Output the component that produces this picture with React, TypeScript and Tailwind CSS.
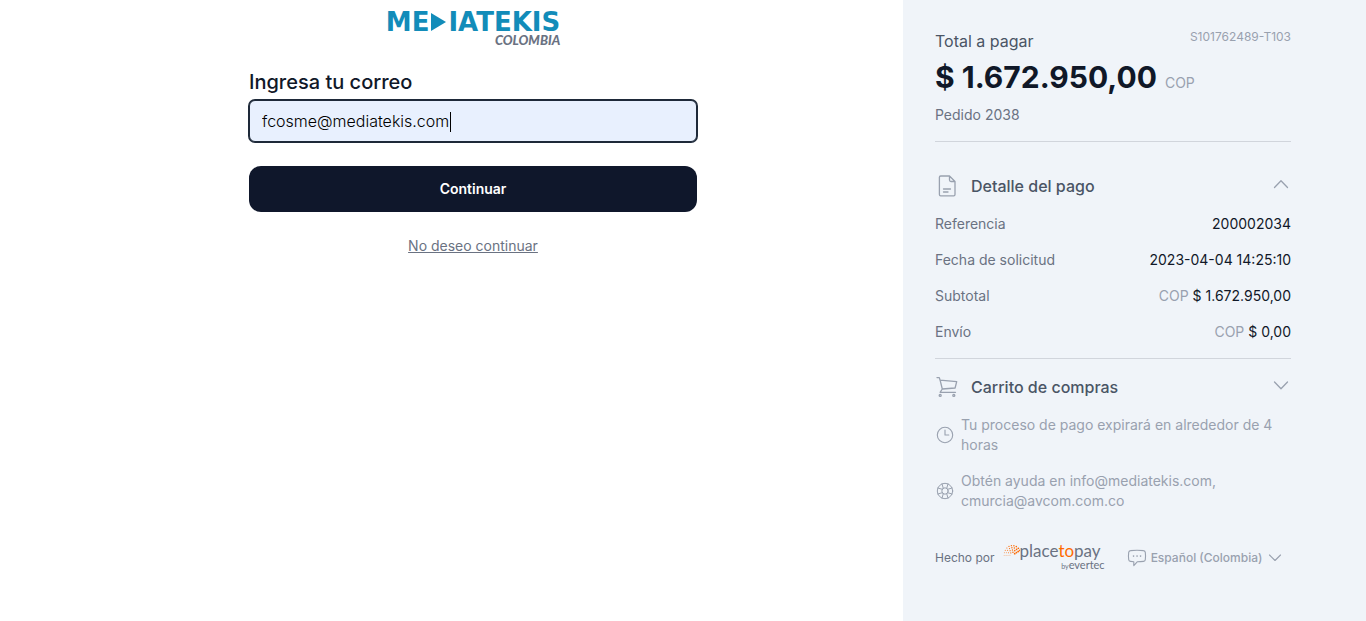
import React, { useEffect, useRef, useState } from 'react';

const details = [
  { label: 'Referencia', value: '200002034' },
  { label: 'Fecha de solicitud', value: '2023-04-04 14:25:10' },
  { label: 'Subtotal', currency: 'COP', value: '$ 1.672.950,00' },
  { label: 'Envío', currency: 'COP', value: '$ 0,00' },
];

const iconProps = {
  fill: 'none',
  stroke: 'currentColor',
  strokeLinecap: 'round' as const,
  strokeLinejoin: 'round' as const,
  'aria-hidden': true,
};

const FileIcon = () => (
  <svg {...iconProps} strokeWidth={1.3} viewBox="0 0 24 24" className="size-6 text-gray-400">
    <path d="M6 2h8.5L20 7.5v13a1.3 1.3 0 0 1-1.3 1.3h-13a1.3 1.3 0 0 1-1.3-1.3V3.300A1.300 1.300 0 0 1 5.700 2zM14.500 2v4a1.500 1.500 0 0 0 1.500 1.500h4M8.500 15h7M8.500 18h4.500" />
  </svg>
);

const CartIcon = () => (
  <svg {...iconProps} strokeWidth={1.3} viewBox="0 0 24 24" className="size-6 text-gray-400">
    <path d="M2 2.600h2.300l.8 2.600L7.300 14M5.100 5.200l16.600 1.500-1.600 6.300-12.800 1-2.200 3.300h15.400" />
    <circle cx="5.200" cy="20.400" r="1" />
    <circle cx="18.800" cy="20.400" r="1" />
  </svg>
);

const ClockIcon = () => (
  <svg {...iconProps} strokeWidth={1.1} viewBox="0 0 20 20" className="size-5 shrink-0 text-gray-400">
    <circle cx="10" cy="10" r="7.700" />
    <path d="M10 5v5h3.800" />
  </svg>
);

const HelpIcon = () => (
  <svg {...iconProps} strokeWidth={1} viewBox="0 0 20 20" className="size-5 shrink-0 text-gray-400">
    <circle cx="10" cy="10" r="7.700" />
    <circle cx="10" cy="10" r="3.200" />
    <path d="M8.300 7.300 7 2.900M7.300 8.300 2.900 7M11.700 7.300 13 2.900M12.700 8.300 17.100 7M8.300 12.700 7 17.100M7.300 11.700 2.900 13M11.700 12.700l1.300 4.400M12.700 11.700l4.400 1.300" />
  </svg>
);

const ChatIcon = () => (
  <svg {...iconProps} strokeWidth={1.1} viewBox="0 0 20 20" className="size-5 shrink-0 text-gray-400">
    <path d="M3.500 2.600Q10 1.800 16.500 2.600a2 2 0 0 1 1.800 1.800q.5 3.600 0 7.200a2 2 0 0 1-1.800 1.800q-3.200.4-6.300.4L6.800 17.600v-3.900l-3.300-.3a2 2 0 0 1-1.800-1.800q-.5-3.600 0-7.200a2 2 0 0 1 1.800-1.800z" />
    <path d="M6.500 8.100h.1M10 8.100h.1M13.500 8.100h.1" strokeWidth={1.6} />
  </svg>
);

const Chevron: React.FC<{ open?: boolean }> = ({ open }) => (
  <svg {...iconProps} strokeWidth={1.3} viewBox="0 0 20 20" className="size-5 text-gray-400">
    <path d={open ? 'M3.500 11.500 10 4.800l6.500 6.700' : 'M3.500 5 10 11.700l6.500-6.700'} />
  </svg>
);

// Arcs of dots forming a dome, heavier towards the right
const fanDots = [3, 5.3, 7.6, 9.9].flatMap((r, ring) =>
  Array.from({ length: 4 + ring * 2 }, (_, i) => {
    const t = i / (3 + ring * 2);
    const angle = Math.PI * (0.98 + t * 0.86);
    return {
      x: 9.5 + r * 0.85 * Math.cos(angle),
      y: 12 + r * 0.95 * Math.sin(angle),
      r: 0.4 + t * 0.5,
    };
  })
);

const MediatekisLogo = () => (
  <div className="flex flex-col items-end" role="img" aria-label="Mediatekis Colombia">
    <div className="flex items-center font-['DejaVu_Sans'] text-[26px] leading-6 font-bold text-[#128cb9]">
      <span>ME</span>
      <svg viewBox="0 0 15 18" className="ml-0.5 h-[18px] w-[15px]" fill="currentColor" aria-hidden="true">
        <path d="M0 0l15 9-15 9z" />
      </svg>
      <span className="ml-0.5">IATEKIS</span>
    </div>
    <span className="font-[Lato] text-[13px] leading-3 font-black text-gray-500 italic">COLOMBIA</span>
  </div>
);

const PlacetopayLogo = () => (
  <div className="flex flex-col items-end" role="img" aria-label="Placetopay by Evertec">
    <div className="mr-1 flex">
      <svg viewBox="0 0 17 14" className="h-[14px] w-[17px] fill-orange-500" aria-hidden="true">
        {fanDots.map((dot, index) => (
          <circle key={index} cx={dot.x} cy={dot.y} r={dot.r} />
        ))}
      </svg>
      <span className="font-[Lato] text-[17px] leading-4 text-gray-500">
        place<span className="text-orange-500">to</span>pay
      </span>
    </div>
    <span className="font-[Lato] text-[11px] leading-3 text-gray-500">
      <span className="text-[7px]">by</span>evertec
    </span>
  </div>
);

const App: React.FC = () => {
  const [email, setEmail] = useState('fcosme@mediatekis.com');
  const [touched, setTouched] = useState(false);
  const [detailOpen, setDetailOpen] = useState(true);
  const [cartOpen, setCartOpen] = useState(false);
  const emailRef = useRef<HTMLInputElement>(null);

  useEffect(() => {
    const input = emailRef.current;
    if (input) {
      input.focus();
      input.setSelectionRange(input.value.length, input.value.length);
    }
  }, []);

  return (
    <div className="grid min-h-screen grid-cols-[1fr_minmax(0,860px)_420px_1fr] bg-white font-[Inter,sans-serif] text-gray-900">
      <main className="col-start-2 px-6 pt-2.5">
        <div className="mx-auto flex max-w-md flex-col">
          <div className="flex justify-center">
            <MediatekisLogo />
          </div>

          <form className="mt-5 flex flex-col" onSubmit={(e) => e.preventDefault()}>
            <label htmlFor="email" className="mb-0.5 text-xl leading-8 font-medium">
              Ingresa tu correo
            </label>
            <div className="relative">
              <input
                ref={emailRef}
                id="email"
                type="text"
                value={email}
                onChange={(e) => {
                  setTouched(true);
                  setEmail(e.target.value);
                }}
                className={`h-[42px] w-full rounded-md border border-gray-800 bg-[#e8f0fe] px-3 text-base font-light text-black ring-1 ring-gray-800 outline-none ${
                  touched ? '' : 'caret-transparent'
                }`}
              />
              {!touched && <span className="absolute top-3 left-[201px] h-5 w-px bg-black" />}
            </div>
            <button type="submit" className="mt-6 h-[46px] rounded-xl bg-slate-900 text-sm font-semibold text-white">
              Continuar
            </button>
          </form>

          <a href="#cancelar" className="mt-6 self-center text-sm text-gray-500 underline">
            No deseo continuar
          </a>
        </div>
      </main>

      <aside className="col-span-2 col-start-3 bg-[#f0f4f9]">
        <div className="w-[420px] px-8 pt-[29px]">
          <div className="flex items-start justify-between">
            <h2 className="text-base leading-6 text-gray-600">Total a pagar</h2>
            <span className="text-xs leading-4 text-gray-400">S101762489-T103</span>
          </div>
          <p className="mt-0.5 flex items-baseline gap-2">
            <span className="text-3xl leading-11 font-bold">$ 1.672.950,00</span>
            <span className="text-sm text-gray-400">COP</span>
          </p>
          <p className="mt-1 border-b border-gray-300 pb-3.5 text-sm leading-6 text-gray-500">Pedido 2038</p>

          <section className="mt-8 border-b border-gray-300 pb-4">
            <button
              type="button"
              aria-expanded={detailOpen}
              onClick={() => setDetailOpen(!detailOpen)}
              className="flex w-full items-center"
            >
              <FileIcon />
              <span className="ml-3 font-medium text-gray-600">Detalle del pago</span>
              <span className="ml-auto">
                <Chevron open={detailOpen} />
              </span>
            </button>
            {detailOpen && (
              <dl className="mt-4 flex flex-col gap-4 text-sm">
                {details.map((row) => (
                  <div key={row.label} className="flex justify-between">
                    <dt className="text-gray-500">{row.label}</dt>
                    <dd>
                      {row.currency && <span className="text-gray-400">{row.currency} </span>}
                      {row.value}
                    </dd>
                  </div>
                ))}
              </dl>
            )}
          </section>

          <button
            type="button"
            aria-expanded={cartOpen}
            onClick={() => setCartOpen(!cartOpen)}
            className="mt-4 flex w-full items-center"
          >
            <CartIcon />
            <span className="ml-3 font-medium text-gray-600">Carrito de compras</span>
            <span className="ml-auto">
              <Chevron open={cartOpen} />
            </span>
          </button>

          <div className="mt-4 flex flex-col gap-4 text-sm text-gray-400">
            <div className="flex items-center gap-1.5">
              <ClockIcon />
              <p>Tu proceso de pago expirará en alrededor de 4 horas</p>
            </div>
            <div className="flex items-center gap-1.5">
              <HelpIcon />
              <p>Obtén ayuda en info@mediatekis.com, cmurcia@avcom.com.co</p>
            </div>
          </div>

          <footer className="mt-8 flex items-center text-xs">
            <span className="mr-2 text-gray-500">Hecho por</span>
            <PlacetopayLogo />
            <div className="ml-[22px] flex items-center text-gray-400">
              <ChatIcon />
              <select
                aria-label="Idioma"
                defaultValue="es-CO"
                className="ml-1 appearance-none bg-transparent text-xs font-medium"
              >
                <option value="es-CO">Español (Colombia)</option>
              </select>
              <svg {...iconProps} strokeWidth={1.1} viewBox="0 0 16 16" className="ml-1 size-4" aria-hidden="true">
                <path d="M2.500 5 8 10.500 13.500 5" />
              </svg>
            </div>
          </footer>
        </div>
      </aside>
    </div>
  );
};

export default App;
